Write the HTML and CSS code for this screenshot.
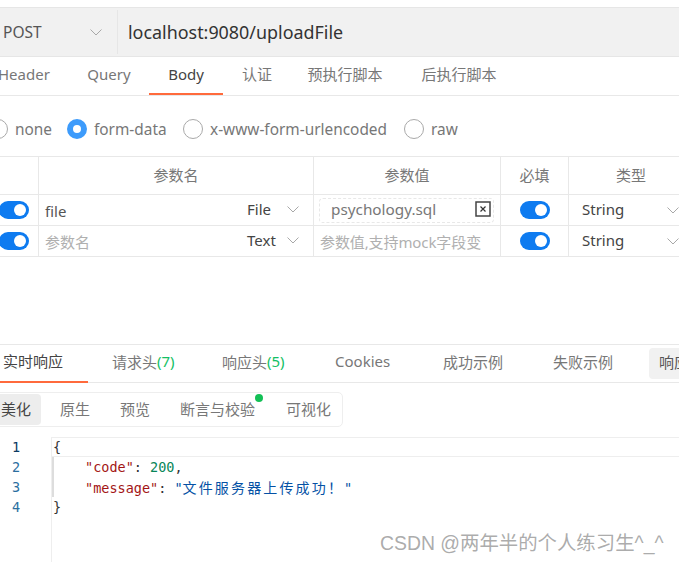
FILE: index.html
```html
<!DOCTYPE html>
<html lang="zh">
<head>
<meta charset="utf-8">
<title>uploadFile</title>
<link rel="stylesheet" href="styles.css">
</head>
<body>
<div class="page">
  <div class="urlbar">
    <div class="method"><span>POST</span><svg class="chev chev-m" viewBox="0 0 12 7"><path d="M.5.5 6 6l5.500-5.500"/></svg></div>
    <div class="url">localhost:9080/uploadFile</div>
  </div>
  <div class="tabs req-tabs">
    <span class="tab t-header">Header</span>
    <span class="tab t-query">Query</span>
    <span class="tab t-body active">Body</span>
    <span class="tab t-auth">认证</span>
    <span class="tab t-pre">预执行脚本</span>
    <span class="tab t-post">后执行脚本</span>
  </div>
  <div class="radios">
    <span class="radio r-none"><i class="dot"></i>none</span>
    <span class="radio r-form"><i class="dot on"></i>form-data</span>
    <span class="radio r-url"><i class="dot"></i>x-www-form-urlencoded</span>
    <span class="radio r-raw"><i class="dot"></i>raw</span>
  </div>
  <div class="table">
    <div class="row head">
      <div class="cell"></div>
      <div class="cell center">参数名</div>
      <div class="cell center">参数值</div>
      <div class="cell center">必填</div>
      <div class="cell center c-type">类型</div>
    </div>
    <div class="row">
      <div class="cell sw-cell"><i class="switch"></i></div>
      <div class="cell name"><span class="fname">file</span><span class="kind">File</span><svg class="chev" viewBox="0 0 12 7"><path d="M.5.5 6 6l5.500-5.500"/></svg></div>
      <div class="cell val"><div class="filebox"><span>psychology.sql</span><svg class="xbox" viewBox="0 0 16 16"><rect x="1" y="1" width="14" height="14"/><path d="m5.500 5.500 5 5m0-5-5 5"/></svg></div></div>
      <div class="cell req"><i class="switch"></i></div>
      <div class="cell type"><span>String</span><svg class="chev" viewBox="0 0 12 7"><path d="M.5.5 6 6l5.500-5.500"/></svg></div>
    </div>
    <div class="row">
      <div class="cell sw-cell"><i class="switch"></i></div>
      <div class="cell name"><span class="ph">参数名</span><span class="kind">Text</span><svg class="chev" viewBox="0 0 12 7"><path d="M.5.5 6 6l5.500-5.500"/></svg></div>
      <div class="cell val"><span class="ph ph-val">参数值,支持mock字段变</span></div>
      <div class="cell req"><i class="switch"></i></div>
      <div class="cell type"><span>String</span><svg class="chev" viewBox="0 0 12 7"><path d="M.5.5 6 6l5.500-5.500"/></svg></div>
    </div>
  </div>
  <div class="tabs res-tabs">
    <span class="rtab r1 active">实时响应</span>
    <span class="rtab r2">请求头<em>(7)</em></span>
    <span class="rtab r3">响应头<em>(5)</em></span>
    <span class="rtab r4">Cookies</span>
    <span class="rtab r5">成功示例</span>
    <span class="rtab r6">失败示例</span>
    <span class="rbtn">响应</span>
  </div>
  <div class="segwrap">
    <div class="seg">
      <span class="s s-on">美化</span>
      <span class="s s-first">原生</span>
      <span class="s">预览</span>
      <span class="s s-dot">断言与校验<i></i></span>
      <span class="s s-last">可视化</span>
    </div>
  </div>
  <div class="editor">
    <div class="gutter"><div class="cur">1</div><div>2</div><div>3</div><div>4</div></div>
    <div class="code">
      <div class="ln curline"><span class="b1">{</span></div>
      <div class="ln ind"><span class="k">"code"</span>: <span class="n">200</span>,</div>
      <div class="ln ind"><span class="k">"message"</span>: <span class="s2">"<span class="cjk">文件服务器上传成功！</span>"</span></div>
      <div class="ln"><span class="b1">}</span></div>
    </div>
  </div>
  <div class="watermark">CSDN @两年半的个人练习生^_^</div>
</div>
</body>
</html>
```
FILE: styles.css
```css
* { box-sizing: border-box; }
html, body { margin: 0; height: 100%; overflow: hidden; background: #fff; }
body { font-family: "Noto Sans", "Noto Sans CJK SC", sans-serif; color: #666; font-size: 15px; }
.page { position: relative; width: 679px; height: 562px; overflow: hidden; padding-top: 7px; }
i { display: block; font-style: normal; }
em { font-style: normal; color: #13c065; }

.chev { width: 12px; height: 7px; flex: none; fill: none; stroke: #a8a8a8; stroke-width: 1; }

.urlbar { height: 50px; display: flex; align-items: center; background: #f1f1f1; border-top: 1px solid #e6e6e6; border-bottom: 1px solid #e6e6e6; }
.method { width: 118px; height: 44px; flex: none; display: flex; align-items: center; padding-left: 3px; border-right: 1px solid #e6e6e6; color: #555; font-size: 15.500px; }
.method span { width: 87px; }
.url { padding-left: 10px; font-size: 17.900px; color: #333; }

.tabs { display: flex; position: relative; }
.req-tabs { height: 39px; border-bottom: 1px solid #e8e8e8; margin-left: -2px; }
.tab { height: 38px; flex: none; display: flex; align-items: center; justify-content: center; padding-bottom: 3px; font-size: 15px; color: #777; border-bottom: 2px solid transparent; }
.tab.active { color: #444; border-bottom-color: #ff6a3c; }
.t-header { width: 71px; justify-content: flex-start; }
.t-query { width: 80px; }
.t-body { width: 74px; }
.t-auth { width: 68px; }
.t-pre { width: 108px; }
.t-post { width: 120px; }

.radios { height: 60px; display: flex; align-items: center; padding-top: 6px; margin-left: -12px; font-size: 15.400px; color: #777; }
.radio { display: flex; align-items: center; gap: 7px; }
.dot { width: 20px; height: 20px; border-radius: 50%; border: 1px solid #a9a9a9; }
.dot.on { border: 6px solid #3d9bfb; }
.r-none { width: 79px; }
.r-form { width: 116px; }
.r-url { width: 221px; }

.table { border-top: 1px solid #e8e8e8; }
.row { display: grid; grid-template-columns: 39px 275px 187px 68px 110px; height: 31px; border-bottom: 1px solid #e8e8e8; }
.row.head { height: 38px; }
.cell { display: flex; align-items: center; border-right: 1px solid #e8e8e8; font-size: 15px; color: #555; min-width: 0; }
.cell:last-child { border-right: 0; }
.center { justify-content: center; color: #777; font-size: 15px; padding-bottom: 2px; }
.c-type { padding-left: 14px; }
.sw-cell { padding-left: 0; margin-left: -1px; }
.switch { width: 30px; height: 18px; border-radius: 9px; background: #0e7bf0; position: relative; flex: none; }
.switch::after { content: ""; position: absolute; right: 3px; top: 3px; width: 12px; height: 12px; border-radius: 50%; background: #fff; }
.name { padding-left: 6px; position: relative; }
.fname { position: relative; top: 1px; }
.name .kind { margin-left: auto; width: 40px; color: #444; position: relative; top: -1px; }
.name .chev { margin-right: 14px; position: relative; top: -1px; }
.ph { color: #b0b0b0; font-size: 15px; }
.val { padding: 0 6px; }
.filebox { width: 175px; height: 25px; display: flex; align-items: center; justify-content: space-between; margin-left: -1px; padding: 0 0 2px 11px; border: 1px dashed #e8e8e8; border-radius: 4px; color: #777; font-size: 15.300px; }
.xbox { width: 16px; height: 16px; margin-right: 2px; fill: #fff; stroke: #444; stroke-width: 1.500; }
.xbox path { stroke-width: 1.200; stroke: #333; }
.ph-val { white-space: nowrap; letter-spacing: -.1px; }
.req { justify-content: center; }
.type { padding-left: 13px; color: #444; justify-content: space-between; }
.type span { position: relative; top: -1px; }

.res-tabs { margin-top: 87px; height: 39px; border-top: 1px solid #e8e8e8; border-bottom: 1px solid #e8e8e8; }
.rtab { height: 37px; flex: none; display: flex; align-items: center; padding-bottom: 5px; font-size: 15px; color: #777; white-space: nowrap; }
.rtab.active { color: #444; border-bottom: 2px solid #ff6a3c; }
.r1 { width: 88px; padding-left: 3px; height: 38px; }
.r2 { width: 110px; padding-left: 24px; }
.r3 { width: 113px; padding-left: 24px; }
.r4 { width: 108px; padding-left: 24px; }
.r5 { width: 110px; padding-left: 24px; }
.r6 { width: 120px; padding-left: 24px; }
.rbtn { width: 30px; height: 31px; margin-top: 3px; padding: 3px 0 0 10px; flex: none; background: #f1f1f1; border-radius: 4px 0 0 4px; color: #555; overflow: hidden; white-space: nowrap; }

.segwrap { padding-top: 9px; height: 54px; margin-left: -8px; }
.seg { display: inline-flex; height: 35px; padding: 1px; border: 1px solid #eee; border-radius: 5px; }
.s { display: flex; align-items: center; justify-content: center; padding: 0 15px 2px; font-size: 15px; color: #777; position: relative; }
.s-first { margin-left: 4px; }
.s-dot { padding-right: 16px; }
.s-last { padding-right: 10px; }
.s-on { width: 47px; background: #ededed; color: #444; border-radius: 4px; justify-content: flex-end; padding: 0 10px 2px 0; }
.s-dot i { position: absolute; right: 8px; top: 0; width: 8px; height: 8px; border-radius: 50%; background: #13c056; }

.editor { display: flex; height: 125px; font-family: "DejaVu Sans Mono", monospace; font-size: 13.500px; line-height: 20px; }
.gutter { width: 52px; color: #2b6f9f; text-indent: 12px; border-right: 1px solid #eee; }
.gutter div { height: 20px; }
.gutter .cur { color: #0b3a63; }
.code { flex: 1; color: #333; }
.ln { height: 20px; padding-left: 1px; white-space: pre; }
.ind { padding-left: 31px; border-left: 2px solid #ddd; }
.curline { border-top: 1px solid #eee; border-bottom: 1px solid #eee; line-height: 18px; }
.b1 { color: #333; }
.k { color: #a31515; }
.n { color: #098658; }
.s2 { color: #0451a5; }
.cjk { font-family: "Noto Sans CJK SC", sans-serif; font-size: 14px; letter-spacing: 2.150px; }

.watermark { position: absolute; left: 380px; top: 530px; font-family: "Liberation Sans", "Noto Sans CJK SC", sans-serif; font-size: 19.400px; line-height: 26px; color: rgba(150,150,150,.8); white-space: nowrap; }
```
